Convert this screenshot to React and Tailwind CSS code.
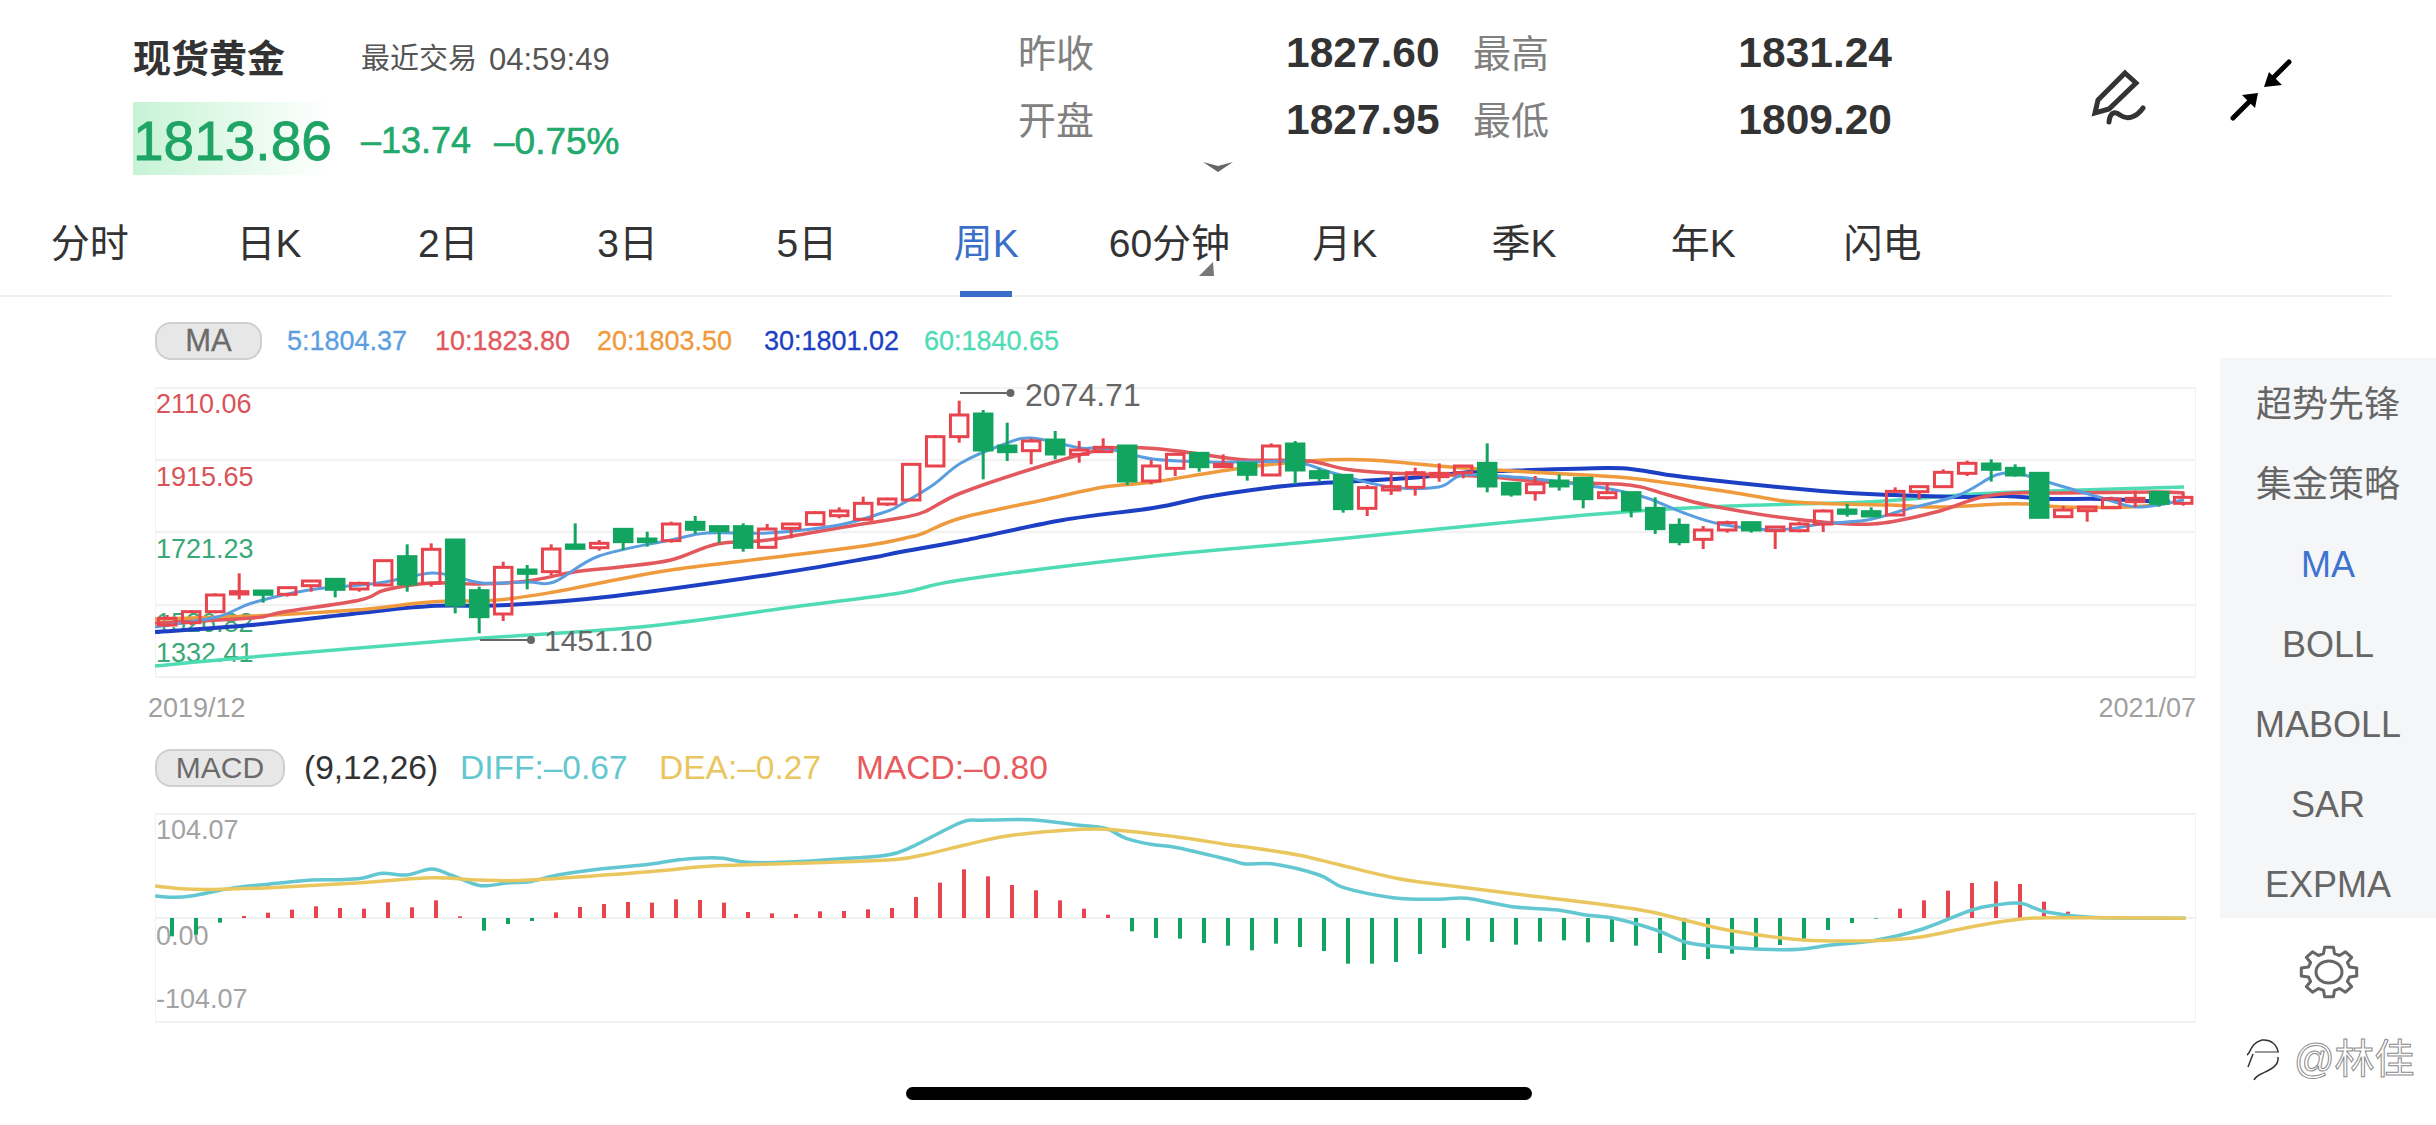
const tabs = ["分时", "日K", "2日", "3日", "5日", "周K", "60分钟", "月K", "季K", "年K", "闪电"];
const sideItems = ["超势先锋", "集金策略", "MA", "BOLL", "MABOLL", "SAR", "EXPMA"];

// [kind, bodyTop, bodyBottom, wickTop, wickBottom], y sampled at 3x per group
const candlesA = [
  ["r", 925, 945, 915, 950], ["r", 905, 938, 900, 945], ["r", 855, 905, 850, 910], ["r", 845, 852, 790, 868],
  ["g", 843, 853, 843, 878], ["r", 833, 853, 830, 860], ["r", 813, 827, 810, 845], ["g", 808, 838, 808, 862],
  ["r", 820, 837, 815, 845], ["r", 752, 825, 750, 825], ["g", 740, 822, 703, 845], ["r", 718, 820, 700, 830],
  ["g", 690, 885, 688, 910], ["g", 842, 920, 830, 970], ["r", 772, 912, 755, 933], ["g", 780, 790, 765, 838],
  ["r", 717, 785, 703, 795], ["g", 705, 715, 640, 718], ["r", 700, 713, 690, 722], ["g", 658, 695, 658, 720],
  ["g", 687, 695, 665, 710], ["r", 642, 692, 635, 698], ["g", 637, 658, 618, 672], ["g", 650, 662, 650, 698],
  ["g", 650, 712, 640, 725], ["r", 657, 712, 642, 715], ["r", 642, 655, 640, 685], ["r", 608, 643, 603, 648],
  ["r", 603, 617, 592, 625], ["r", 580, 628, 560, 632], ["r", 567, 582, 563, 588],
];
const candlesB = [
  ["r", 283, 390, 280, 392], ["r", 200, 288, 195, 290], ["r", 135, 200, 92, 218], ["g", 132, 240, 120, 328],
  ["g", 228, 245, 158, 273], ["r", 213, 242, 205, 283], ["g", 210, 252, 183, 268], ["r", 240, 253, 213, 278],
  ["r", 232, 245, 205, 248], ["g", 228, 333, 228, 345], ["r", 288, 333, 270, 343], ["r", 253, 295, 248, 318],
  ["g", 250, 290, 250, 305], ["r", 283, 290, 253, 292], ["g", 280, 313, 280, 332], ["r", 228, 315, 220, 318],
  ["g", 222, 300, 213, 342], ["g", 305, 323, 295, 335], ["g", 316, 416, 316, 428], ["r", 353, 415, 345, 438],
  ["r", 350, 360, 312, 375], ["r", 308, 352, 293, 377], ["r", 310, 320, 280, 335], ["r", 288, 308, 285, 325],
  ["g", 280, 348, 220, 367], ["g", 340, 372, 340, 380], ["r", 342, 368, 318, 392], ["g", 333, 348, 313, 362],
  ["g", 325, 386, 325, 415], ["r", 368, 383, 340, 388], ["g", 368, 420, 368, 442], ["g", 415, 476, 382, 492],
  ["g", 466, 515, 445, 526], ["r", 480, 508, 468, 537], ["r", 458, 480, 452, 488], ["g", 458, 480, 458, 488],
  ["r", 471, 482, 471, 537], ["r", 462, 482, 455, 487], ["r", 423, 462, 418, 486], ["g", 420, 430, 402, 440],
  ["g", 425, 438, 412, 442], ["r", 364, 435, 352, 438], ["r", 350, 365, 347, 388], ["r", 307, 350, 298, 353],
  ["r", 280, 310, 272, 318], ["g", 282, 298, 268, 335], ["g", 295, 315, 283, 320], ["g", 310, 442, 310, 442],
  ["r", 420, 440, 408, 443], ["r", 411, 422, 411, 455], ["r", 387, 413, 380, 416], ["r", 385, 395, 362, 412],
  ["g", 367, 400, 367, 410], ["r", 382, 400, 365, 407],
];
const candles = [
  ...candlesA.map((c) => [c[0], ...c.slice(1).map((v) => 310 + v / 3)]),
  ...candlesB.map((c) => [c[0], ...c.slice(1).map((v) => 370 + v / 3)]),
];

const parse = (s) => s.split(" ").map((p) => p.split(",").map(Number));

const ma60 = parse("155,666 252,657 456,640 640,627 793,607 900,593 961,580 1145,557 1308,542 1500,523 1624,512 1730,506 1867,502 1959,495 2019,492 2184,487");
const ma30 = parse("155,632 252,625 360,613 431,606 508,605 615,596 768,575 870,558 900,552 961,541 1063,520 1153,508 1206,497 1267,488 1308,484 1410,478 1471,472 1500,471 1606,468 1638,470 1684,477 1821,491 1895,495 1959,497 2005,496 2051,499 2101,499 2170,502");
const ma20 = parse("155,619 252,616 355,610 431,602 497,600 554,592 615,580 671,570 768,558 870,545 910,537 924,533 961,518 1043,500 1104,487 1153,482 1235,469 1308,461 1369,460 1451,467 1546,473 1629,478 1730,492 1794,502 1890,505 1941,507 2000,504 2028,504 2065,507 2129,507 2170,503");
const ma10 = parse("155,623 252,618 283,612 360,600 385,590 431,583 477,584 528,581 574,572 620,567 671,560 717,544 768,540 844,527 900,518 924,512 961,493 1035,468 1104,449 1145,448 1178,451 1206,455 1247,460 1308,461 1345,469 1390,473 1451,475 1492,477 1546,482 1629,485 1665,494 1707,505 1794,519 1872,524 1936,512 1978,498 2014,493 2060,493 2157,492 2184,493");
const ma5 = parse("155,627 217,617 252,603 309,590 360,585 385,582 431,573 457,577 482,583 528,582 554,582 599,556 671,540 707,533 768,533 839,525 885,512 900,505 933,485 961,463 1002,445 1031,438 1080,448 1104,448 1153,459 1210,462 1247,462 1296,462 1333,473 1390,487 1439,487 1463,475 1512,477 1537,479 1610,489 1647,498 1684,513 1720,524 1776,530 1821,524 1867,520 1904,510 1959,495 1996,475 2019,474 2051,483 2102,498 2138,507 2184,500");

// bar heights at 3x, positive goes up (red), negative goes down (green)
const macdBars = [
  -55, -50, -14, 6, 16, 25, 35, 30, 28, 47, 32, 53, 5, -38, -18, -9, 17, 33, 42, 48, 46, 56, 54, 46, 18, 14, 12, 20, 21,
  26, 30, 63, 106, 146, 125, 99, 83, 53, 28, 10, -40, -60, -62, -75, -83, -97, -77, -87, -99, -137, -137, -132, -108,
  -90, -68, -72, -80, -71, -67, -73, -72, -83, -105, -126, -123, -107, -93, -81, -64, -36, -15, -2, 28, 53, 82, 105,
  110, 102, 49, 19, 1, 0, 0, -3, 0,
];

const pts = (left, right) => [
  ...left.map(([x, y]) => [130 + x / 1.4255, 730 + y / 3]),
  ...right.map(([x, y]) => [1200 + x / 1.4255, 730 + y / 3]),
];

const diff = pts(
  [[36, 498], [60, 502], [90, 497], [130, 480], [160, 470], [210, 460], [260, 450], [300, 449], [330, 445], [360, 430], [395, 435], [430, 417], [460, 437], [500, 467], [540, 458], [570, 455], [610, 435], [670, 417], [740, 403], [780, 390], [820, 384], [845, 385], [880, 397], [940, 396], [1010, 387], [1080, 375], [1115, 350], [1185, 277], [1215, 271], [1285, 269], [1350, 285], [1390, 295], [1420, 325], [1455, 343], [1495, 354], [1568, 390]],
  [[65, 402], [105, 402], [170, 435], [205, 473], [275, 503], [340, 508], [380, 505], [445, 530], [510, 540], [550, 555], [590, 565], [650, 600], [690, 635], [730, 648], [800, 658], [855, 658], [900, 645], [960, 632], [1030, 597], [1100, 540], [1135, 525], [1170, 520], [1205, 545], [1270, 562], [1405, 565]]
);
const dea = pts(
  [[36, 468], [80, 477], [130, 478], [200, 473], [330, 458], [430, 443], [500, 450], [570, 450], [740, 425], [830, 408], [950, 400], [1080, 390], [1130, 375], [1190, 345], [1250, 318], [1320, 303], [1390, 298], [1490, 320], [1568, 345]],
  [[70, 352], [140, 375], [200, 405], [280, 445], [340, 463], [450, 492], [620, 537], [690, 570], [760, 603], [860, 630], [960, 632], [1030, 620], [1100, 590], [1160, 570], [1210, 563], [1405, 565]]
);

// catmull-rom through the sampled points
function smooth(p) {
  let d = `M${p[0][0]} ${p[0][1]}`;
  for (let i = 0; i < p.length - 1; i++) {
    const a = p[Math.max(i - 1, 0)];
    const b = p[i];
    const c = p[i + 1];
    const e = p[Math.min(i + 2, p.length - 1)];
    const c1 = [b[0] + (c[0] - a[0]) / 6, b[1] + (c[1] - a[1]) / 6];
    const c2 = [c[0] - (e[0] - b[0]) / 6, c[1] - (e[1] - b[1]) / 6];
    d += `C${c1[0].toFixed(1)} ${c1[1].toFixed(1)} ${c2[0].toFixed(1)} ${c2[1].toFixed(1)} ${c[0].toFixed(1)} ${c[1].toFixed(1)}`;
  }
  return d;
}

function gearPath(cx, cy, rx, ry) {
  const out = [];
  for (let k = 0; k < 8; k++) {
    const a = -90 + k * 45;
    [[-15, 0.76], [-9, 1], [9, 1], [15, 0.76]].forEach(([d, r]) => {
      const t = ((a + d) * Math.PI) / 180;
      out.push(`${(cx + rx * r * Math.cos(t)).toFixed(1)} ${(cy + ry * r * Math.sin(t)).toFixed(1)}`);
    });
  }
  return "M" + out.join("L") + "Z";
}

function Candle({ c, i }) {
  const [kind, top, bottom, wickTop, wickBottom] = c;
  const x = 167.2 + 24 * i;
  const color = kind === "r" ? "#e8444e" : "#12a55f";
  return (
    <g stroke={color} strokeWidth="3">
      <line x1={x} x2={x} y1={wickTop} y2={top} />
      <line x1={x} x2={x} y1={bottom} y2={wickBottom} />
      <rect x={x - 8.75} y={top} width="17.5" height={bottom - top} fill={kind === "r" ? "none" : color} />
    </g>
  );
}

function AxisLabel({ className, children }) {
  return <span className={`absolute left-0 leading-none ${className}`}>{children}</span>;
}

function Pill({ width, text, children }) {
  return (
    <div className={`${width} ${text} h-[38px] shrink-0 rounded-[16px] bg-[#e7e7e7] border-2 border-[#cfcfcf] flex items-center justify-center leading-none text-[#6b6b6b]`}>
      {children}
    </div>
  );
}

export default function App() {
  return (
    <div className="relative w-[2436px] h-[1125px] overflow-hidden bg-white [font-family:'Liberation_Sans','Noto_Sans_CJK_SC',sans-serif]">
      {/* Quote header */}
      <div className="relative flex h-[190px]">
        <div className="ml-[133px] w-[885px] shrink-0">
          <div className="h-[102px] pt-[16px] flex items-center">
            <span className="w-[228px] text-[38px] leading-none font-bold text-[#333]">现货黄金</span>
            <span className="text-[29px] leading-none text-[#555]">最近交易</span>
            <span className="ml-[12px] text-[31px] leading-none text-[#555]">04:59:49</span>
          </div>
          <div className="h-[73px] flex items-center">
            <div className="w-[197px] h-[73px] pt-[5px] flex items-center whitespace-nowrap bg-gradient-to-r from-[#c6f3d5] to-white text-[55px] leading-none text-[#1ea465] [-webkit-text-stroke:0.8px_#1ea465]">
              1813.86
            </div>
            <span className="ml-[31px] w-[133px] pt-[5px] text-[36px] leading-none text-[#22a96c] [-webkit-text-stroke:0.6px_#22a96c]">–13.74</span>
            <span className="pt-[5px] text-[37px] leading-none text-[#22a96c] [-webkit-text-stroke:0.6px_#22a96c]">–0.75%</span>
          </div>
        </div>
        <div className="mt-[20px] grid grid-cols-[268px_155px_451px] auto-rows-[67px] items-center text-[38px] leading-none text-[#808080]">
          <span>昨收</span>
          <span className="text-[42.5px] font-bold text-[#333]">1827.60</span>
          <div className="flex items-center justify-between pl-[32px]">
            <span>最高</span>
            <span className="text-[42.5px] font-bold text-[#333]">1831.24</span>
          </div>
          <span>开盘</span>
          <span className="text-[42.5px] font-bold text-[#333]">1827.95</span>
          <div className="flex items-center justify-between pl-[32px]">
            <span>最低</span>
            <span className="text-[42.5px] font-bold text-[#333]">1809.20</span>
          </div>
        </div>
        <svg className="ml-[198px] mt-[60px] w-[60px] h-[70px] shrink-0" viewBox="2088 60 60 70" fill="none">
          <path d="M2123 73 L2134 83 L2107 109 L2093 113 L2096 100 Z" stroke="#333" strokeWidth="5" strokeLinejoin="miter" />
          <path d="M2107 122 C2108 112 2113 111 2118 115 C2125 120 2134 118 2141 108" stroke="#333" strokeWidth="5" strokeLinecap="round" />
        </svg>
        <svg className="ml-[80px] mt-[58px] w-[64px] h-[64px] shrink-0" viewBox="2228 58 64 64" fill="#000">
          <path d="M2287 62 L2271 78 M2231 118 L2247 102" stroke="#000" strokeWidth="5" strokeLinecap="round" />
          <path d="M2262 87 L2267 72 L2280 85 Z M2256 93 L2240 95 L2253 108 Z" />
        </svg>
        <svg className="absolute left-[1203px] top-[160px] w-[30px] h-[13px]" viewBox="0 0 30 13" fill="#666">
          <path d="M0 2 L15 6 L30 2 L15 12 Z" />
        </svg>
      </div>

      {/* Period tabs */}
      <div className="relative flex w-[2391px] h-[107px] border-b-2 border-[#f0f0f0]">
        {tabs.map((t) => (
          <div key={t} className={`relative w-[179.3px] pt-[2px] flex items-center justify-center whitespace-nowrap text-[39px] leading-none ${t === "周K" ? "text-[#3a6fc9]" : "text-[#333]"} ${t === "60分钟" ? "pl-[8px]" : ""}`}>
            {t}
            {t === "周K" && <div className="absolute left-1/2 -translate-x-1/2 -bottom-[2px] w-[52px] h-[6px] bg-[#3a6fc9]" />}
          </div>
        ))}
        <svg className="absolute left-[1199px] top-[72px] w-[15px] h-[14px]" viewBox="0 0 15 14" fill="#777">
          <path d="M14 0 L15 14 L0 14 Z" />
        </svg>
      </div>

      <div className="flex">
        <div className="w-[2220px] shrink-0 pl-[155px] pr-[24px]">
          {/* MA legend */}
          <div className="mt-[25px] h-[37px] flex items-center text-[27px] leading-none [-webkit-text-stroke:0.3px_currentColor]">
            <Pill width="w-[107px]" text="text-[31px]">MA</Pill>
            <span className="ml-[25px] w-[148px] pt-[2px] text-[#5b9ee0]">5:1804.37</span>
            <span className="w-[162px] pt-[2px] text-[#e2585c]">10:1823.80</span>
            <span className="w-[167px] pt-[2px] text-[#ef9a3d]">20:1803.50</span>
            <span className="w-[160px] pt-[2px] text-[#1d3fc4]">30:1801.02</span>
            <span className="pt-[2px] text-[#4fdcb5]">60:1840.65</span>
          </div>

          {/* Candlestick chart */}
          <div className="relative mt-[28px] h-[291px] border-y-2 border-x border-[#f2f2f2]">
            <AxisLabel className="top-[2px] text-[27px] text-[#d9535a]">2110.06</AxisLabel>
            <AxisLabel className="top-[75px] text-[27px] text-[#d9535a]">1915.65</AxisLabel>
            <AxisLabel className="top-[147px] text-[27px] text-[#3aa876]">1721.23</AxisLabel>
            <AxisLabel className="top-[221px] text-[27px] text-[#3aa876]">1526.82</AxisLabel>
            <AxisLabel className="top-[251px] text-[27px] text-[#3aa876]">1332.41</AxisLabel>
            <svg className="absolute -inset-x-px -inset-y-[2px] block w-[2041px] h-[291px]" viewBox="155 387 2041 291" fill="none">
              <path d="M155 460H2196M155 532H2196M155 605H2196" stroke="#f2f2f2" strokeWidth="2.5" />
              <path d={smooth(ma60)} stroke="#4fdcb5" strokeWidth="3.5" />
              <path d={smooth(ma30)} stroke="#1d3fc4" strokeWidth="4" />
              <path d={smooth(ma20)} stroke="#ef9a3d" strokeWidth="3.5" />
              <path d={smooth(ma10)} stroke="#e2585c" strokeWidth="3.5" />
              <path d={smooth(ma5)} stroke="#5b9ee0" strokeWidth="3" />
              {candles.map((c, i) => (
                <Candle key={i} c={c} i={i} />
              ))}
              <path d="M960 393H1007M480 640H528" stroke="#666" strokeWidth="2" />
              <circle cx="1010.5" cy="393" r="4" fill="#666" />
              <circle cx="531" cy="640" r="4" fill="#666" />
            </svg>
            <span className="absolute left-[869px] top-[-10px] text-[32px] leading-none text-[#666]">2074.71</span>
            <span className="absolute left-[388px] top-[237px] text-[30px] leading-none text-[#666]">1451.10</span>
          </div>

          <div className="-ml-[7px] h-[60px] flex items-center justify-between text-[27px] leading-none text-[#a0a0a0]">
            <span>2019/12</span>
            <span>2021/07</span>
          </div>

          {/* MACD legend */}
          <div className="mt-[10px] h-[39px] flex items-center text-[33.5px] leading-none">
            <Pill width="w-[130px]" text="text-[30px]">MACD</Pill>
            <span className="ml-[19px] w-[156px] text-[#333]">(9,12,26)</span>
            <span className="w-[199px] text-[#62c7d0]">DIFF:–0.67</span>
            <span className="w-[197px] text-[#eac65f]">DEA:–0.27</span>
            <span className="text-[#e85a5e]">MACD:–0.80</span>
          </div>

          {/* MACD chart */}
          <div className="relative mt-[26px] h-[210px] border-y-2 border-x border-[#f2f2f2]">
            <AxisLabel className="top-[2px] text-[27px] text-[#a3a3a3]">104.07</AxisLabel>
            <AxisLabel className="top-[108px] text-[27px] text-[#a3a3a3]">0.00</AxisLabel>
            <AxisLabel className="top-[171px] text-[27px] text-[#a3a3a3]">-104.07</AxisLabel>
            <svg className="absolute -inset-x-px -inset-y-[2px] block w-[2041px] h-[210px]" viewBox="155 813 2041 210" fill="none">
              <path d="M155 918H2196" stroke="#f0f0f0" strokeWidth="2" />
              {macdBars.map((v, i) => {
                const h = Math.abs(v) / 3;
                if (!h) return null;
                return (
                  <rect key={i} x={170 + 24 * i} y={v > 0 ? 918 - h : 918} width="4" height={h} fill={v > 0 ? "#e8444e" : "#12a55f"} />
                );
              })}
              <path d={smooth(diff)} stroke="#62c7d0" strokeWidth="3.5" />
              <path d={smooth(dea)} stroke="#eac65f" strokeWidth="3.5" />
            </svg>
          </div>
        </div>

        {/* Indicator side list */}
        <div className="w-[216px] shrink-0">
          <div className="mt-[61px] h-[560px] pt-[7px] flex flex-col bg-[#f5f6f8]">
            {sideItems.map((s) => (
              <div key={s} className={`h-[80px] shrink-0 flex items-center justify-center text-[36px] leading-none ${s === "MA" ? "text-[#3f73d0]" : "text-[#666]"}`}>
                {s}
              </div>
            ))}
          </div>
          <svg className="mt-[27px] ml-[79px] w-[60px] h-[54px] block" viewBox="0 0 60 54" fill="none" stroke="#666" strokeWidth="3">
            <path d={gearPath(30, 27, 28, 25)} strokeLinejoin="round" />
            <ellipse cx="30" cy="27" rx="13" ry="11" />
          </svg>
        </div>
      </div>

      {/* Watermark */}
      <div className="absolute left-[2245px] top-[1037px] flex items-center">
        <svg className="w-[36px] h-[44px]" viewBox="0 0 36 44" fill="none" stroke="#333" strokeWidth="1.5">
          <path d="M2 18 C6 16 5 6 17 3 C26 2 32 8 33 15" />
          <path d="M10 15 H34" strokeWidth="1" />
          <path d="M8 17 L3 30" />
          <path d="M33 20 C34 30 24 33 16 37 C12 39 10 41 9 43" />
        </svg>
        <span className="ml-[13px] text-[40px] leading-none text-white [-webkit-text-stroke:1px_#8a8a8a]">@林佳</span>
      </div>

      {/* Home indicator */}
      <div className="absolute left-[906px] top-[1087px] w-[626px] h-[13px] rounded-full bg-black" />
    </div>
  );
}
